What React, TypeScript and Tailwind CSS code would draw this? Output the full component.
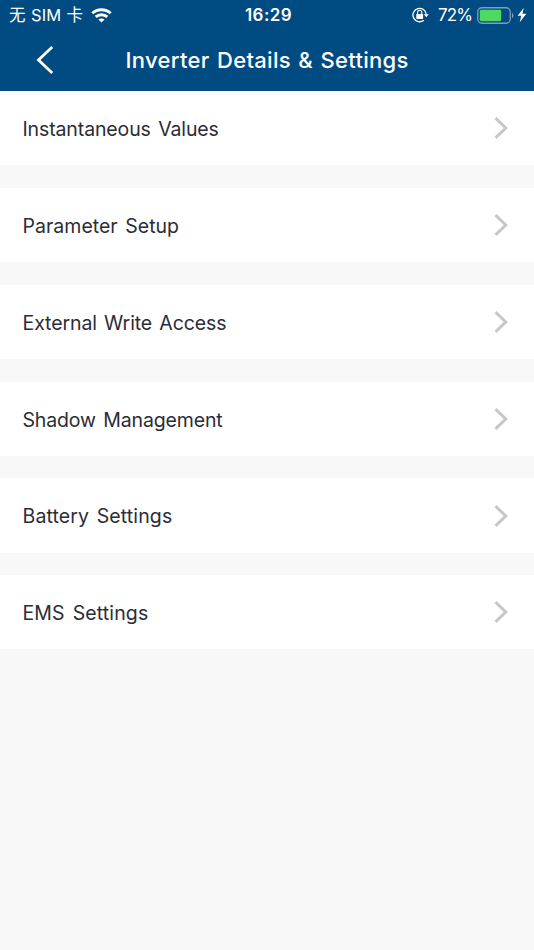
import React from 'react';

interface MenuItem {
  label: string;
  spacing: string;
}

const menuItems: MenuItem[] = [
  { label: 'Instantaneous Values', spacing: 'tracking-[-0.12px] [word-spacing:2px]' },
  { label: 'Parameter Setup', spacing: 'tracking-[0.02px] [word-spacing:2px]' },
  { label: 'External Write Access', spacing: 'tracking-[-0.09px] [word-spacing:1.8px]' },
  { label: 'Shadow Management', spacing: 'tracking-[-0.14px] [word-spacing:2px]' },
  { label: 'Battery Settings', spacing: 'tracking-[0.12px] [word-spacing:2px]' },
  { label: 'EMS Settings', spacing: 'tracking-[0.12px] [word-spacing:2.4px]' },
];

const WifiIcon: React.FC = () => (
  <svg className="ml-[8px] h-[15px] w-[21px]" viewBox="0 0 21 15" fill="none" stroke="currentColor" strokeWidth="2.9">
    <path d="M1.3 5.2C6.4 .5 14.6 .5 19.7 5.2" />
    <path d="M4.7 8.9C8 6 13 6 16.3 8.9" />
    <path d="M10.5 14.6 7.4 11.5C9.2 10 11.8 10 13.6 11.5Z" fill="currentColor" stroke="none" />
  </svg>
);

const RotationLockIcon: React.FC = () => (
  <svg className="h-4 w-[17px]" viewBox="0 0 17 16" fill="none" stroke="currentColor" strokeWidth="1.3">
    <path d="M11.9 13.2A6.7 6.7 0 1 1 14.3 7.6" />
    <path d="M11.8 7.3H16.8L14.3 10.3Z" fill="currentColor" stroke="none" />
    <rect x="4.3" y="6.9" width="6.8" height="5" rx=".6" fill="currentColor" stroke="none" />
    <path d="M5.6 7.2V5.4a2.1 2.1 0 0 1 4.2 0V7.2" strokeWidth="1.1" />
  </svg>
);

const BatteryIcon: React.FC = () => (
  <svg className="ml-[5px] h-[17px] w-[37px]" viewBox="0 0 37 17">
    <rect x=".75" y=".75" width="32.5" height="15.5" rx="4.2" fill="none" stroke="#7f9fba" strokeWidth="1.3" />
    <rect x="2.8" y="2.8" width="21.4" height="11.4" rx="1.4" fill="#4cd964" />
    <path d="M35 5.8c1.9 1 1.9 4.4 0 5.4Z" fill="#7f9fba" />
  </svg>
);

const BoltIcon: React.FC = () => (
  <svg className="ml-[3px] h-[16px] w-[10px]" viewBox="0 0 10 16" fill="currentColor">
    <path d="M6.8 .8 .6 8.8H4.3L2.7 15.2 9.4 6.7H5.4Z" />
  </svg>
);

const StatusBar: React.FC = () => (
  <div className="grid h-[30px] grid-cols-3 items-center pl-[9px] pr-[7px] text-[17px] leading-[30px]">
    <div className="flex items-center whitespace-pre">
      <span className="font-['Inter','Noto_Sans_CJK_SC',sans-serif] text-[16.5px] tracking-[0.15px] [word-spacing:0.5px]">
        无 SIM 卡
      </span>
      <WifiIcon />
    </div>
    <div className="pl-px text-center font-semibold tracking-[0.4px]">16:29</div>
    <div className="flex items-center justify-end">
      <RotationLockIcon />
      <span className="ml-[9px] tracking-[-0.9px]">72%</span>
      <BatteryIcon />
      <BoltIcon />
    </div>
  </div>
);

export default function App() {
  return (
    <div className="flex min-h-screen w-full flex-col bg-[#f8f8f8] font-['Inter',sans-serif]">
      <header className="h-[91.2px] bg-[#004b82] text-white">
        <StatusBar />
        <div className="flex h-[61px] items-center pl-[36px]">
          <svg className="mb-px h-[30px] w-[18px]" viewBox="0 0 18 30" fill="none" stroke="currentColor" strokeWidth="2.8">
            <path d="M16.2 2 2.5 15 16.2 28" />
          </svg>
          <h1 className="ml-[71.5px] whitespace-nowrap text-[22px] font-medium leading-[61px] tracking-[0.3px] [word-spacing:1.3px]">
            Inverter Details &amp; Settings
          </h1>
        </div>
      </header>
      <ul className="flex flex-col gap-[22.5px]">
        {menuItems.map((item) => (
          <li key={item.label} className="flex h-[74.3px] items-center justify-between bg-white pl-[22.5px] pr-[25.5px]">
            <span className={`whitespace-nowrap pt-[2.8px] text-[19.5px] text-[#2c2c36] ${item.spacing}`}>
              {item.label}
            </span>
            <svg className="h-[22px] w-[15px]" viewBox="0 0 15 22" fill="none" stroke="#c7c7c7" strokeWidth="3">
              <path d="M1.5 1.2 11.8 11 1.5 20.8" />
            </svg>
          </li>
        ))}
      </ul>
    </div>
  );
}
